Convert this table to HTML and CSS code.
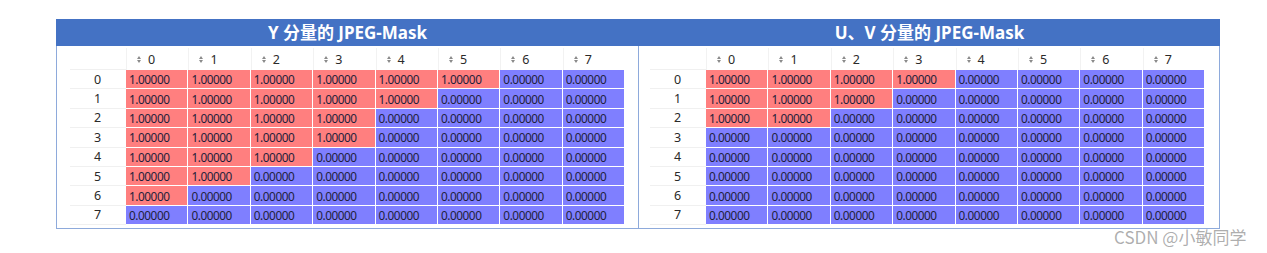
FILE: index.html
```html
<!DOCTYPE html>
<html lang="zh">
<head>
<meta charset="utf-8">
<title>JPEG-Mask</title>
<link rel="stylesheet" href="styles.css">
</head>
<body>
<div class="wrap">
  <section class="panel panel-left">
    <h2 class="title">Y 分量的 JPEG-Mask</h2>
    <div class="body">
      <div class="grid">
        <div class="corner"></div>
        <div class="ch"><span class="sort"></span>0</div><div class="ch"><span class="sort"></span>1</div><div class="ch"><span class="sort"></span>2</div><div class="ch"><span class="sort"></span>3</div><div class="ch"><span class="sort"></span>4</div><div class="ch"><span class="sort"></span>5</div><div class="ch"><span class="sort"></span>6</div><div class="ch"><span class="sort"></span>7</div>

        <div class="rh">0</div>
        <div class="c one">1.00000</div><div class="c one">1.00000</div><div class="c one">1.00000</div><div class="c one">1.00000</div><div class="c one">1.00000</div><div class="c one">1.00000</div><div class="c zero">0.00000</div><div class="c zero">0.00000</div>
        <div class="rh">1</div>
        <div class="c one">1.00000</div><div class="c one">1.00000</div><div class="c one">1.00000</div><div class="c one">1.00000</div><div class="c one">1.00000</div><div class="c zero">0.00000</div><div class="c zero">0.00000</div><div class="c zero">0.00000</div>
        <div class="rh">2</div>
        <div class="c one">1.00000</div><div class="c one">1.00000</div><div class="c one">1.00000</div><div class="c one">1.00000</div><div class="c zero">0.00000</div><div class="c zero">0.00000</div><div class="c zero">0.00000</div><div class="c zero">0.00000</div>
        <div class="rh">3</div>
        <div class="c one">1.00000</div><div class="c one">1.00000</div><div class="c one">1.00000</div><div class="c one">1.00000</div><div class="c zero">0.00000</div><div class="c zero">0.00000</div><div class="c zero">0.00000</div><div class="c zero">0.00000</div>
        <div class="rh">4</div>
        <div class="c one">1.00000</div><div class="c one">1.00000</div><div class="c one">1.00000</div><div class="c zero">0.00000</div><div class="c zero">0.00000</div><div class="c zero">0.00000</div><div class="c zero">0.00000</div><div class="c zero">0.00000</div>
        <div class="rh">5</div>
        <div class="c one">1.00000</div><div class="c one">1.00000</div><div class="c zero">0.00000</div><div class="c zero">0.00000</div><div class="c zero">0.00000</div><div class="c zero">0.00000</div><div class="c zero">0.00000</div><div class="c zero">0.00000</div>
        <div class="rh">6</div>
        <div class="c one">1.00000</div><div class="c zero">0.00000</div><div class="c zero">0.00000</div><div class="c zero">0.00000</div><div class="c zero">0.00000</div><div class="c zero">0.00000</div><div class="c zero">0.00000</div><div class="c zero">0.00000</div>
        <div class="rh">7</div>
        <div class="c zero">0.00000</div><div class="c zero">0.00000</div><div class="c zero">0.00000</div><div class="c zero">0.00000</div><div class="c zero">0.00000</div><div class="c zero">0.00000</div><div class="c zero">0.00000</div><div class="c zero">0.00000</div>
      </div>
    </div>
  </section>
  <section class="panel panel-right">
    <h2 class="title">U、V 分量的 JPEG-Mask</h2>
    <div class="body">
      <div class="grid">
        <div class="corner"></div>
        <div class="ch"><span class="sort"></span>0</div><div class="ch"><span class="sort"></span>1</div><div class="ch"><span class="sort"></span>2</div><div class="ch"><span class="sort"></span>3</div><div class="ch"><span class="sort"></span>4</div><div class="ch"><span class="sort"></span>5</div><div class="ch"><span class="sort"></span>6</div><div class="ch"><span class="sort"></span>7</div>

        <div class="rh">0</div>
        <div class="c one">1.00000</div><div class="c one">1.00000</div><div class="c one">1.00000</div><div class="c one">1.00000</div><div class="c zero">0.00000</div><div class="c zero">0.00000</div><div class="c zero">0.00000</div><div class="c zero">0.00000</div>
        <div class="rh">1</div>
        <div class="c one">1.00000</div><div class="c one">1.00000</div><div class="c one">1.00000</div><div class="c zero">0.00000</div><div class="c zero">0.00000</div><div class="c zero">0.00000</div><div class="c zero">0.00000</div><div class="c zero">0.00000</div>
        <div class="rh">2</div>
        <div class="c one">1.00000</div><div class="c one">1.00000</div><div class="c zero">0.00000</div><div class="c zero">0.00000</div><div class="c zero">0.00000</div><div class="c zero">0.00000</div><div class="c zero">0.00000</div><div class="c zero">0.00000</div>
        <div class="rh">3</div>
        <div class="c zero">0.00000</div><div class="c zero">0.00000</div><div class="c zero">0.00000</div><div class="c zero">0.00000</div><div class="c zero">0.00000</div><div class="c zero">0.00000</div><div class="c zero">0.00000</div><div class="c zero">0.00000</div>
        <div class="rh">4</div>
        <div class="c zero">0.00000</div><div class="c zero">0.00000</div><div class="c zero">0.00000</div><div class="c zero">0.00000</div><div class="c zero">0.00000</div><div class="c zero">0.00000</div><div class="c zero">0.00000</div><div class="c zero">0.00000</div>
        <div class="rh">5</div>
        <div class="c zero">0.00000</div><div class="c zero">0.00000</div><div class="c zero">0.00000</div><div class="c zero">0.00000</div><div class="c zero">0.00000</div><div class="c zero">0.00000</div><div class="c zero">0.00000</div><div class="c zero">0.00000</div>
        <div class="rh">6</div>
        <div class="c zero">0.00000</div><div class="c zero">0.00000</div><div class="c zero">0.00000</div><div class="c zero">0.00000</div><div class="c zero">0.00000</div><div class="c zero">0.00000</div><div class="c zero">0.00000</div><div class="c zero">0.00000</div>
        <div class="rh">7</div>
        <div class="c zero">0.00000</div><div class="c zero">0.00000</div><div class="c zero">0.00000</div><div class="c zero">0.00000</div><div class="c zero">0.00000</div><div class="c zero">0.00000</div><div class="c zero">0.00000</div><div class="c zero">0.00000</div>
      </div>
    </div>
  </section>
</div>
<div class="watermark">CSDN @小敏同学</div>
</body>
</html>
```

FILE: styles.css
```css
html, body {
  margin: 0;
  padding: 0;
  background: #ffffff;
}
body {
  position: relative;
  width: 1267px;
  height: 253px;
  font-family: "Noto Sans", "Noto Sans CJK SC", sans-serif;
  color: #2a2a2a;
}
.wrap {
  display: flex;
  margin: 19px 0 0 56px;
  width: 1164px;
}
.panel {
  display: flex;
  flex-direction: column;
}
.panel-left {
  width: 583px;
}
.panel-right {
  width: 581px;
}
.title {
  margin: 0;
  height: 27px;
  line-height: 27px;
  background: #4472c4;
  color: #ffffff;
  font-family: "Noto Sans", "Noto Sans CJK SC", sans-serif;
  font-size: 17px;
  font-weight: 700;
  text-align: center;
}
.body {
  border-right: 1px solid #8eaadb;
  border-bottom: 1px solid #8eaadb;
  padding: 0 0 3px 0;
}
.panel-left .body {
  border-left: 1px solid #8eaadb;
  padding-left: 13px;
}
.panel-right .body {
  padding-left: 11px;
}
.grid {
  display: grid;
  grid-template-columns: 56px repeat(8, 62.4px);
  grid-template-rows: 24px repeat(8, 19.4px);
}
.corner {
  border-bottom: 1px solid #f0f0f0;
}
.ch {
  display: flex;
  align-items: center;
  padding-left: 10px;
  font-size: 12.5px;
  color: #2a2a2a;
  border-left: 1px solid #f2f2f2;
  margin-top: 2px;
}
.sort {
  display: inline-flex;
  flex-direction: column;
  gap: 1px;
  margin-right: 7px;
}
.sort::before {
  content: "";
  border-left: 2.5px solid transparent;
  border-right: 2.5px solid transparent;
  border-bottom: 3px solid #8a8a8a;
}
.sort::after {
  content: "";
  border-left: 2.5px solid transparent;
  border-right: 2.5px solid transparent;
  border-top: 3px solid #8a8a8a;
}
.rh {
  display: flex;
  align-items: center;
  justify-content: center;
  font-size: 12.5px;
  color: #2a2a2a;
  border-bottom: 1px solid #f0f0f0;
  padding-right: 1px;
}
.c {
  display: flex;
  align-items: center;
  padding-left: 3px;
  font-size: 11.8px;
  letter-spacing: -0.45px;
  color: #1e1e3a;
  border-right: 1px solid #ffffff;
  border-bottom: 1px solid #ffffff;
  box-sizing: border-box;
}
.one {
  background: #ff7f7f;
}
.zero {
  background: #7f7fff;
}
.watermark {
  position: absolute;
  left: 1114px;
  top: 224px;
  font-family: "Noto Sans CJK SC", "Noto Sans", sans-serif;
  font-size: 17px;
  color: rgba(120, 120, 120, 0.6);
}
```
